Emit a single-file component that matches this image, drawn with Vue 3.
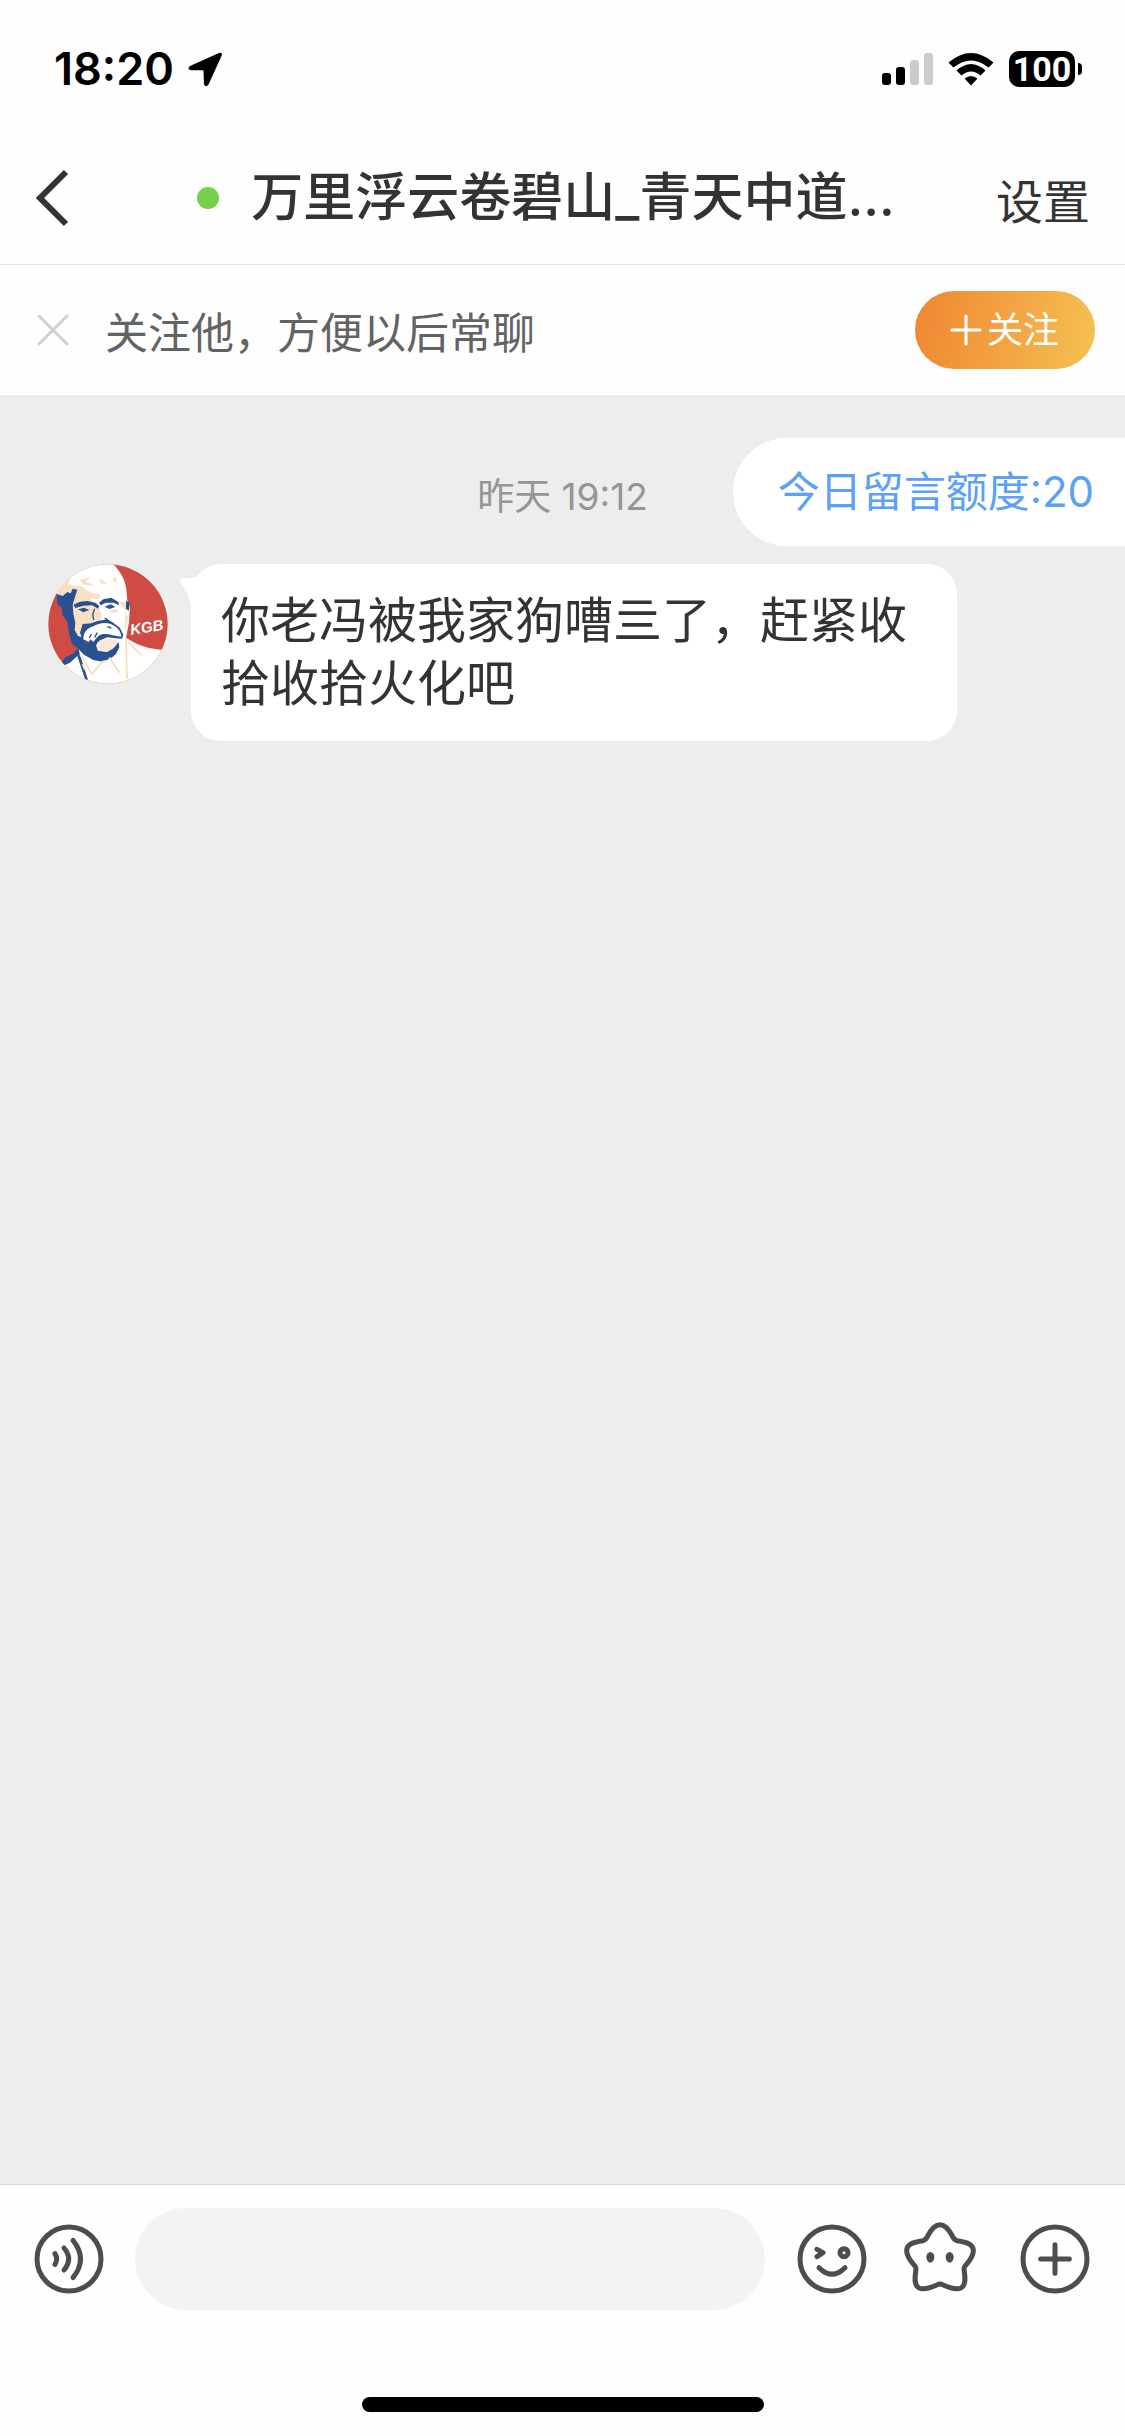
<script setup>
import { ref } from 'vue'

const peer = '万里浮云卷碧山_青天中道...'
const followVisible = ref(true)
const draft = ref('')
const bars = [12, 18, 25, 32]
</script>

<template>
  <div class="page">
    <div class="status">
      <div class="status-left">
        <span class="clock">18:20</span>
        <svg class="locate" viewBox="0 0 34 35" aria-hidden="true">
          <path d="M2 14 L31 1 Q35 0 33.500 4 L20.500 32.500 Q18 36 16 32.500 L15.500 19 Q15.500 18.300 14.500 18.300 L3 18.300 Q-1.500 17 2 14Z" />
        </svg>
      </div>
      <div class="status-right">
        <div class="signal">
          <i v-for="(h, i) in bars" :key="i" :class="{ dim: i > 1 }" :style="{ height: h + 'px' }"></i>
        </div>
        <svg class="wifi" viewBox="0 0 46 33" aria-hidden="true">
          <path d="M0.500 9.500 Q23 -9.500 45.500 9.500 L40.500 14.500 Q23 0.500 5.500 14.500Z" />
          <path d="M8.500 17.500 Q23 4.500 37.500 17.500 L32.500 22.500 Q23 14.500 13.500 22.500Z" />
          <path d="M16.500 25.500 Q23 20.500 29.500 25.500 L23 32.500Z" />
        </svg>
        <div class="battery"><span class="level">100</span><i class="tip"></i></div>
      </div>
    </div>

    <header class="header">
      <button class="back" aria-label="返回">
        <svg viewBox="0 0 34 56"><path d="M30 2 L4 28 L30 54" /></svg>
      </button>
      <div class="peer">
        <i class="online"></i>
        <h1>{{ peer }}</h1>
      </div>
      <button class="settings">设置</button>
    </header>

    <section v-if="followVisible" class="follow">
      <button class="dismiss" aria-label="关闭" @click="followVisible = false">
        <svg viewBox="0 0 30 30"><path d="M1 1 L29 29 M29 1 L1 29" /></svg>
      </button>
      <p>关注他，方便以后常聊</p>
      <button class="follow-btn">
        <svg viewBox="0 0 30 30" aria-hidden="true"><path d="M15 1 V29 M1 15 H29" /></svg>
        <span>关注</span>
      </button>
    </section>

    <main class="chat">
      <div class="quota">今日留言额度:20</div>
      <time class="stamp">昨天 19:12</time>
      <article class="message">
        <svg class="avatar" viewBox="54 70 360 360" role="img" aria-label="头像">
          <defs><clipPath id="face"><circle cx="234" cy="250" r="179" /></clipPath></defs>
          <g clip-path="url(#face)">
            <rect x="50" y="66" width="370" height="370" fill="#cf4c45" />
            <path fill="#fff" d="M76 150 L70 60 H240 C262 82 284 108 289 145 L292 182 L300 194 L297 245 L288 292 C308 300 330 326 414 328 V440 H60 L98 372 L150 320 L106 200Z" />
            <path fill="#f9dfc3" d="M82 156 C90 125 108 108 122 103 L116 130 C134 140 146 132 158 139 C170 150 186 160 204 160 C212 162 214 170 205 176 L180 172 L190 185 L200 230 L188 252 L160 272 L142 292 L104 210 L84 178Z" />
            <path fill="#f9dfc3" d="M150 118 L184 108 L168 122 L192 136 L160 132Z M206 112 L232 128 L214 131Z M254 106 L262 128 L248 120Z" />
            <path fill="#f9dfc3" d="M196 196 L210 206 L218 250 L196 246Z M266 182 L290 186 L287 212 L294 232 L284 290 L286 210 L276 196Z M240 208 L262 205 L264 214 L246 217Z" />
            <path fill="#29518f" d="M80 160 L98 166 L112 154 L122 158 L128 144 L142 147 L134 172 L128 192 L130 218 L136 246 L134 268 L144 286 L158 290 L164 306 L182 320 L204 330 L232 334 L250 322 L266 304 L268 320 L258 340 L244 352 L218 363 L190 358 L162 342 L142 322 L126 310 L118 282 L112 244 L98 222 L96 204 L82 190Z" />
            <path fill="#29518f" d="M94 366 L106 350 L128 340 L145 322 L150 342 L174 418 L168 424 L142 346 L120 366 L103 374Z" />
            <path fill="#29518f" d="M130 192 L150 183 L172 181 L196 186 L208 196 L204 204 L186 194 L160 195 L136 202Z M207 186 L220 176 L244 171 L264 183 L268 194 L250 186 L228 186 L212 194Z M288 180 L300 188 L296 210 L288 204Z M144 206 L162 201 L178 208 L160 215Z M224 198 L242 191 L256 199 L238 205Z" />
            <path fill="#29518f" d="M158 250 L184 248 L200 242 L232 236 L250 246 L270 262 L280 282 L276 294 L256 293 L232 290 L208 300 L198 314 L204 330 L180 322 L158 300 L150 276Z" />
            <path fill="#fff" d="M160 296 C160 274 172 262 190 257 C206 246 236 242 254 256 C266 264 274 276 274 288 C252 286 238 278 220 280 C204 282 198 294 190 304 L182 296 L176 304Z" />
            <path fill="#fbe9d5" d="M202 306 C216 292 240 292 258 296 L262 306 C254 324 236 334 216 332 C206 328 198 318 202 306Z" />
            <path fill="none" stroke="#29518f" stroke-width="4" d="M194 204 L188 222 L191 238 M224 232 L234 238 M178 292 L184 280 M194 290 L202 276 M232 258 L244 262" />
            <path fill="none" stroke="#f9dfc3" stroke-width="6" d="M150 340 L186 400 L216 364 L232 360 M238 350 L268 396 M288 292 L291 414 M296 305 L336 345 M110 376 L116 388 M158 370 L164 386" />
            <text class="logo" x="303" y="283" transform="rotate(-9 303 283)">KGB</text>
          </g>
        </svg>
        <div class="bubble">
          <svg class="tail" viewBox="0 0 22 34" aria-hidden="true"><path d="M2 0 Q10 1 22 -2 V34 H11 Q11 18 1 5 Q-1 1 2 0Z" /></svg>
          <p>你老冯被我家狗嘈亖了，赶紧收拾收拾火化吧</p>
        </div>
      </article>
    </main>

    <footer class="dock">
      <form class="composer" @submit.prevent>
        <button type="button" class="tool" aria-label="语音">
          <svg viewBox="0 0 210 210">
            <circle cx="105" cy="105" r="96" />
            <path d="M63 89 Q73 105 63 121 M90 72 Q118 105 90 138 M117 49 Q162 105 117 161" />
          </svg>
        </button>
        <input v-model="draft" type="text" class="field" aria-label="消息" />
        <div class="stickers">
          <button type="button" class="tool" aria-label="表情">
            <svg viewBox="0 0 210 210">
              <circle cx="105" cy="105" r="96" />
              <path d="M60 76 L78 86 L60 98 M66 131 Q105 170 144 131" />
              <circle cx="141" cy="86" r="12" />
            </svg>
          </button>
          <button type="button" class="tool" aria-label="收藏">
            <svg viewBox="0 0 210 210">
              <path d="M105 2 C123 2 134 20 143 38 C147 46 149 48 156 50 C185 54 205 60 205 80 C205 100 190 114 180 126 C176 131 177 136 178 142 C181 165 182 185 168 192 C152 198 130 190 113 182 Q105 178 97 182 C80 190 58 198 42 192 C28 185 29 165 32 142 C33 136 34 131 30 126 C20 114 5 100 5 80 C5 60 25 54 54 50 C61 48 63 46 67 38 C76 20 87 2 105 2Z" />
              <ellipse class="eye" cx="76" cy="100" rx="12" ry="16" />
              <ellipse class="eye" cx="134" cy="100" rx="12" ry="16" />
            </svg>
          </button>
        </div>
        <button type="button" class="tool" aria-label="更多">
          <svg viewBox="0 0 210 210">
            <circle cx="105" cy="105" r="96" />
            <path d="M105 62 V148 M62 105 H148" />
          </svg>
        </button>
      </form>
      <div class="home"></div>
    </footer>
  </div>
</template>

<style>
body {
  margin: 0;
  background: #fefefe;
}
</style>

<style scoped>
.page {
  display: flex;
  flex-direction: column;
  min-height: 100vh;
  font-family: Inter, "Noto Sans CJK SC", sans-serif;
  color: #333;
  background: #fefefe;
}
button {
  margin: 0;
  padding: 0;
  border: 0;
  background: none;
  font: inherit;
  color: inherit;
}
svg {
  display: block;
  overflow: visible;
}
h1,
p {
  margin: 0;
}

.status {
  display: flex;
  justify-content: space-between;
  align-items: center;
  padding: 45px 43px 39px 54px;
  color: #000;
}
.status-left,
.status-right {
  display: flex;
  align-items: center;
}
.clock {
  font-size: 45px;
  font-weight: 600;
  line-height: 48px;
}
.locate {
  width: 34px;
  height: 35px;
  margin-left: 14px;
}
.signal {
  display: flex;
  align-items: flex-end;
  gap: 5px;
  margin-right: 15px;
}
.signal i {
  width: 9px;
  border-radius: 3px;
  background: #000;
}
.signal .dim {
  background: #cbcbcb;
}
.wifi {
  width: 46px;
  height: 33px;
  margin-right: 15px;
}
.battery {
  display: flex;
  align-items: center;
  gap: 3px;
}
.level {
  width: 66px;
  border-radius: 10px;
  background: #000;
  color: #fff;
  font-family: Roboto, sans-serif;
  font-size: 34px;
  font-weight: 700;
  line-height: 36px;
  text-align: center;
}
.tip {
  width: 4px;
  height: 12px;
  border-radius: 0 4px 4px 0;
  background: #000;
}

.header {
  display: flex;
  align-items: center;
  height: 132px;
  padding: 0 35px 0 36px;
  border-bottom: 1px solid #e4e4e4;
}
.back svg {
  width: 34px;
  height: 56px;
  fill: none;
  stroke: #333;
  stroke-width: 6;
}
.peer {
  display: flex;
  flex: 1;
  align-items: center;
  justify-content: center;
  gap: 32px;
  padding-left: 26px;
}
.online {
  width: 22px;
  height: 22px;
  border-radius: 50%;
  background: #76d04b;
}
.peer h1 {
  font-size: 52px;
  font-weight: 500;
  line-height: 64px;
}
.settings {
  padding-top: 8px;
  font-size: 47px;
  line-height: 60px;
}

.follow {
  display: flex;
  align-items: center;
  height: 130px;
  padding: 0 30px 0 38px;
}
.dismiss svg {
  width: 30px;
  height: 30px;
  fill: none;
  stroke: #d0d0d0;
  stroke-width: 3;
  stroke-linecap: round;
}
.follow p {
  flex: 1;
  padding-top: 6px;
  margin-left: 37px;
  font-size: 43px;
  line-height: 60px;
  color: #636363;
}
.follow-btn {
  display: flex;
  align-items: center;
  justify-content: center;
  gap: 6px;
  width: 180px;
  height: 78px;
  border-radius: 39px;
  background: linear-gradient(100deg, #ef8632, #f5c152);
  color: #fff;
  font-size: 36px;
  line-height: 48px;
}
.follow-btn svg {
  width: 30px;
  height: 30px;
  fill: none;
  stroke: #fff;
  stroke-width: 3;
  stroke-linecap: round;
}

.chat {
  position: relative;
  flex: 1;
  display: flex;
  flex-direction: column;
  padding: 78px 48px 48px;
  background: #ededed;
}
.quota {
  position: absolute;
  top: 43px;
  right: 0;
  padding: 0 31px 0 45px;
  border-radius: 54px 0 0 54px;
  background: #fff;
  color: #5ba1f8;
  font-size: 42px;
  line-height: 108px;
}
.stamp {
  align-self: center;
  font-size: 37px;
  line-height: 48px;
  color: #959595;
}
.message {
  display: flex;
  align-items: flex-start;
  gap: 23px;
  margin-top: 43px;
}
.avatar {
  flex: none;
  width: 120px;
  height: 120px;
}
.logo {
  font: italic 700 45px "Liberation Sans", sans-serif;
  fill: #fff;
}
.bubble {
  position: relative;
  max-width: 706px;
  padding: 25px 30px 26px;
  border-radius: 30px;
  background: #fff;
}
.bubble p {
  font-size: 49px;
  line-height: 63px;
}
.tail {
  position: absolute;
  top: 14px;
  left: -11px;
  width: 22px;
  height: 34px;
  fill: #fff;
}

.dock {
  border-top: 1px solid #d9d9d9;
}
.composer {
  display: flex;
  align-items: center;
  padding: 23px 35px 0 34px;
}
.tool {
  flex: none;
}
.tool svg {
  width: 70px;
  height: 70px;
  fill: none;
  stroke: #4d4d4d;
  stroke-width: 15;
  stroke-linecap: round;
  stroke-linejoin: round;
}
.tool .eye {
  fill: #4d4d4d;
  stroke: none;
}
.field {
  flex: 1;
  min-width: 0;
  height: 102px;
  box-sizing: border-box;
  margin: 0 32px 0 31px;
  padding: 0 40px;
  border: 0;
  border-radius: 51px;
  background: #f3f3f3;
  font: inherit;
  font-size: 42px;
}
.stickers {
  display: flex;
  gap: 38px;
  margin-right: 45px;
}
.home {
  width: 402px;
  height: 15px;
  margin: 87px auto 24px;
  border-radius: 8px;
  background: #000;
}
</style>
